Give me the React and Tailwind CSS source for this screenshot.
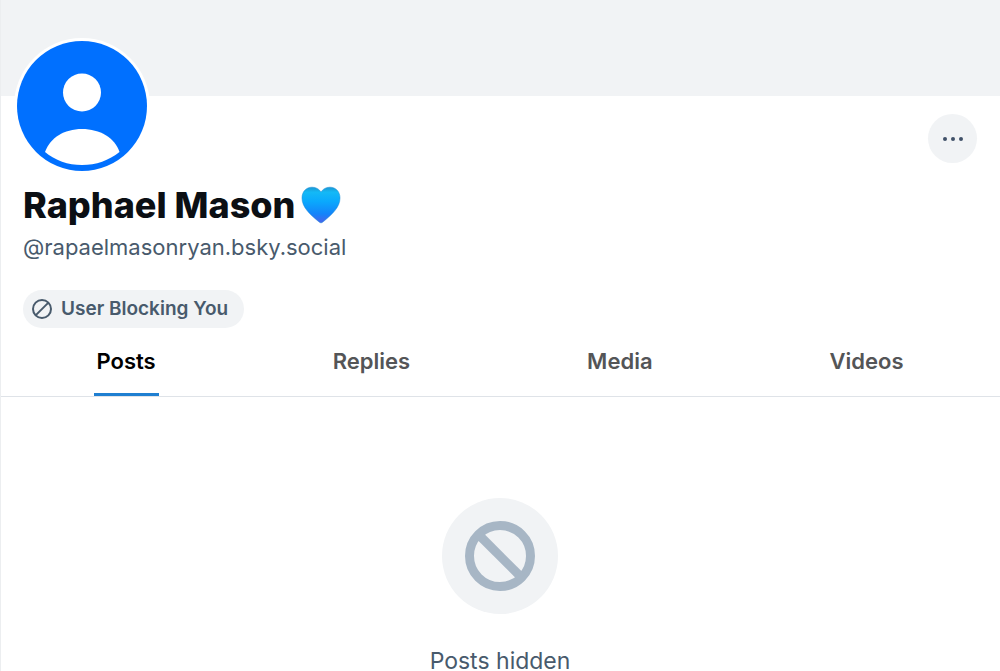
import React from 'react';

const tabs = ['Posts', 'Replies', 'Media', 'Videos'];

const Avatar = () => (
    <div className="relative -mt-[58px] -ml-[9px] h-[136px] w-[136px] rounded-full bg-white p-[3px]">
        <svg viewBox="0 0 130 130" className="h-full w-full" role="img" aria-label="Avatar">
            <circle cx="65" cy="65" r="65" fill="#0070ff" />
            <circle cx="65" cy="51.5" r="19" fill="#fff" />
            <path d="M28 111C33 97 47 88 65 88s33 9 37.5 23C92 119.5 79 124 65 124s-27-4.5-37-13z" fill="#fff" />
        </svg>
    </div>
);

const Heart = () => (
    <svg viewBox="0 0 40 38" className="h-[38px] w-10" role="img" aria-label="Blue heart">
        <defs>
            <linearGradient id="heart" x1="0" y1="0" x2="0" y2="1">
                <stop offset="0" stopColor="#1b96d2" />
                <stop offset="0.14" stopColor="#14b9f6" />
                <stop offset="0.4" stopColor="#0aa9fd" />
                <stop offset="0.75" stopColor="#1484fa" />
                <stop offset="1" stopColor="#4a63ea" />
            </linearGradient>
        </defs>
        <path
            d="M20 6C18 2.8 14.8 1.2 11 1.2 5.2 1.2 1 5.6 1 12c0 9 7.5 16 16.5 23.5 2 1.8 3 1.8 5 0C31.5 28 39 21 39 12 39 5.6 34.8 1.2 29 1.2 25.2 1.2 22 2.8 20 6z"
            fill="url(#heart)"
            stroke="#1389d6"
            strokeOpacity="0.5"
        />
    </svg>
);

const ProfileHeader = () => (
    <header>
        <div className="h-24 bg-[#f1f3f5]" />
        <div className="pr-[23px] pl-[22px]">
            <div className="flex items-start justify-between">
                <Avatar />
                <button
                    type="button"
                    aria-label="More options"
                    className="mt-[18px] flex h-[49px] w-[49px] items-center justify-center rounded-full bg-[#f1f3f5]"
                >
                    <svg viewBox="0 0 20 4" className="h-1 w-5" fill="#405168">
                        <circle cx="2" cy="2" r="2" />
                        <circle cx="10" cy="2" r="2" />
                        <circle cx="18" cy="2" r="2" />
                    </svg>
                </button>
            </div>
            <h1 className="mt-2 flex items-center gap-1.5 text-[36px] leading-[46px] font-extrabold text-[#0b0f14]">
                Raphael Mason
                <Heart />
            </h1>
            <p className="mt-1 text-[22px] leading-[30px] text-[#485a6c]">@rapaelmasonryan.bsky.social</p>
            <div className="mt-7 flex">
                <button
                    type="button"
                    className="flex h-[38px] items-center gap-2 rounded-full bg-[#f1f3f5] pr-4 pl-2 text-[19px] font-semibold text-[#485a6c]"
                >
                    <svg viewBox="0 0 22 22" className="h-[22px] w-[22px]" fill="none" stroke="currentColor" strokeWidth="2">
                        <circle cx="11" cy="11" r="9" />
                        <path d="M4.6 17.4 17.4 4.6" />
                    </svg>
                    User Blocking You
                </button>
            </div>
        </div>
    </header>
);

const Tabs = () => (
    <nav className="mt-4 flex border-b border-[#dfe3e8] pr-2 pl-[7px]" role="tablist">
        {tabs.map((tab, i) => (
            <button
                key={tab}
                type="button"
                role="tab"
                aria-selected={i === 0}
                className={`flex grow justify-center text-[22px] leading-[34px] font-semibold ${i === 0 ? 'text-black' : 'text-[#545557]'}`}
            >
                <span className={`border-b-3 px-[3px] pb-[15px] ${i === 0 ? 'border-[#1f7fd1]' : 'border-transparent'}`}>
                    {tab}
                </span>
            </button>
        ))}
    </nav>
);

const HiddenPosts = () => (
    <section className="flex flex-col items-center pt-[101px] pr-px">
        <div className="flex h-[116px] w-[116px] items-center justify-center rounded-full bg-[#f1f3f5]">
            <svg viewBox="0 0 70 70" className="h-[70px] w-[70px]" fill="none" stroke="#a7b6c5" strokeWidth="9">
                <circle cx="35" cy="35" r="30.5" />
                <path d="M13.5 13.5l43 43" />
            </svg>
        </div>
        <p className="mt-9 text-[23px] leading-[22px] text-[#485a6c]">Posts hidden</p>
    </section>
);

const App = () => (
    <main className="min-h-screen border-l border-[#eceef0] bg-white font-['Inter',sans-serif]">
        <ProfileHeader />
        <Tabs />
        <HiddenPosts />
    </main>
);

export default App;
